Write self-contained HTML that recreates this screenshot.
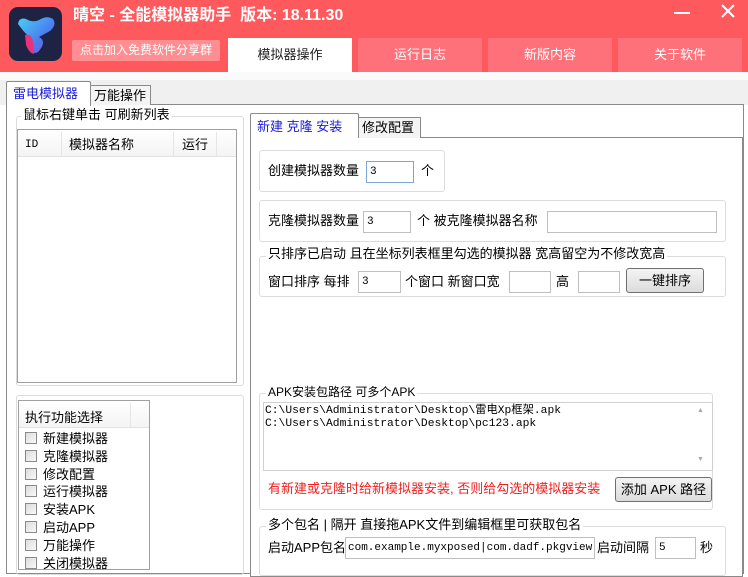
<!DOCTYPE html>
<html><head><meta charset="utf-8"><style>
*{margin:0;padding:0;box-sizing:border-box}
body{width:748px;height:568px;overflow:hidden;background:#fff;font-family:"Liberation Sans","Noto Sans CJK SC",sans-serif;font-size:12px;color:#000;position:relative}
.a{position:absolute;white-space:nowrap}
.hdr{left:0;top:0;width:748px;height:72px;background:#fe5a5e}
.tab{top:38px;height:34px;width:124px;background:#ff717a;color:#fff;font-size:13px;text-align:center;line-height:34px}
.grp{border:1px solid #dcdcdc;border-radius:3px}
.leg{background:#fff;padding:0 2px;font-size:12px;line-height:14px}
.inp{border:1px solid #bfbfbf;background:#fff;height:22px;font-size:11px;line-height:20px;padding-left:3px;font-family:"Liberation Mono","Noto Sans CJK SC",monospace}
.btn{border:1px solid #707070;border-radius:3px;background:linear-gradient(#f4f4f4,#dcdcdc);text-align:center;font-size:13px}
.lbl{font-size:12px;line-height:14px}
.cb{width:12px;height:12px;border:1px solid #8a8a8a;background:linear-gradient(135deg,#ddd,#f8f8f8)}
</style></head><body>
<div class="a hdr"></div>
<div class="a" style="left:9px;top:7px;width:53px;height:54px;border-radius:9px;background:#1e2344"></div>
<svg class="a" style="left:9px;top:7px" width="53" height="54" viewBox="0 0 53 54">
<defs><linearGradient id="g" x1="0" y1="0" x2="1" y2="1"><stop offset="0" stop-color="#4ad0f5"/><stop offset="0.6" stop-color="#4a7df0"/><stop offset="1" stop-color="#8a4bd8"/></linearGradient></defs>
<path d="M9 17 Q10 10 17 12 Q24 16 30 13 Q38 8 44 12 Q48 18 41 24 L30 30 Q38 34 30 44 Q26 48 22 44 L20 30 Q14 24 9 17Z" fill="url(#g)"/>
<path d="M16 28 Q22 26 24 34 L25 47 Q20 46 17 38Z" fill="#e8327a"/>
</svg>
<div class="a" style="left:73px;top:6px;color:#fff;font-size:16px;font-weight:bold;line-height:20px">晴空 - 全能模拟器助手&nbsp; 版本: 18.11.30</div>
<div class="a" style="left:72px;top:40px;width:148px;height:21px;background:#ff8e93;color:#fff;font-size:12px;line-height:21px;text-align:center;border-radius:2px">点击加入免费软件分享群</div>
<div class="a tab" style="left:228px;background:#fff;color:#222">模拟器操作</div>
<div class="a tab" style="left:358px">运行日志</div>
<div class="a tab" style="left:488px">新版内容</div>
<div class="a tab" style="left:618px">关于软件</div>
<div class="a" style="left:674px;top:12px;width:16px;height:2px;background:#fff"></div>
<svg class="a" style="left:720px;top:3px" width="16" height="16"><path d="M2 2L14 14M14 2L2 14" stroke="#fff" stroke-width="2"/></svg>
<div class="a" style="left:0;top:72px;width:748px;height:8px;background:#fafafa"></div>
<div class="a" style="left:0;top:80px;width:748px;height:25px;background:#f0f0f0"></div>
<div class="a" style="left:6px;top:104px;width:738px;height:470px;border:1px solid #8a8a8a;background:#fff"></div>
<div class="a" style="left:6px;top:81px;width:85px;height:25px;border:1px solid #8a8a8a;border-bottom:none;background:#fff;color:#1a1ad8;font-size:13px;line-height:24px;padding-left:6px;border-radius:2px 2px 0 0">雷电模拟器</div>
<div class="a" style="left:90px;top:85px;width:61px;height:20px;border:1px solid #8a8a8a;border-bottom:none;background:#f4f4f4;font-size:13px;line-height:19px;padding-left:3px">万能操作</div>

<div class="a grp" style="left:16px;top:116px;width:228px;height:270px"></div>
<div class="a leg" style="left:21px;top:108px;font-size:13px">鼠标右键单击 可刷新列表</div>
<div class="a" style="left:17px;top:129px;width:220px;height:254px;border:1px solid #a0a0a0;background:#fff"></div>
<div class="a" style="left:18px;top:130px;width:218px;height:27px;background:linear-gradient(#fff,#f4f4f4);border-bottom:1px solid #e2e2e2"></div>
<div class="a" style="left:61px;top:132px;width:1px;height:24px;background:#e5e5e5"></div>
<div class="a" style="left:173px;top:132px;width:1px;height:24px;background:#e5e5e5"></div>
<div class="a" style="left:216px;top:132px;width:1px;height:24px;background:#e5e5e5"></div>
<div class="a" style="left:25px;top:139px;font-size:11px;font-family:'Liberation Mono',monospace">ID</div>
<div class="a" style="left:69px;top:134px;font-size:13px">模拟器名称</div>
<div class="a" style="left:182px;top:134px;font-size:13px">运行</div>

<div class="a grp" style="left:16px;top:395px;width:228px;height:180px"></div>
<div class="a" style="left:18px;top:400px;width:132px;height:170px;border:1px solid #a0a0a0;background:#fff"></div>
<div class="a" style="left:19px;top:401px;width:130px;height:27px;background:linear-gradient(#fff,#f4f4f4);border-bottom:1px solid #e2e2e2"></div>
<div class="a" style="left:130px;top:403px;width:1px;height:24px;background:#e5e5e5"></div>
<div class="a" style="left:25px;top:407px;font-size:13px">执行功能选择</div>
<div class="a" style="left:25px;top:430px;line-height:17.8px;font-size:13px">
<div><span class="cb" style="display:inline-block;vertical-align:-1px;margin-right:6px"></span>新建模拟器</div>
<div><span class="cb" style="display:inline-block;vertical-align:-1px;margin-right:6px"></span>克隆模拟器</div>
<div><span class="cb" style="display:inline-block;vertical-align:-1px;margin-right:6px"></span>修改配置</div>
<div><span class="cb" style="display:inline-block;vertical-align:-1px;margin-right:6px"></span>运行模拟器</div>
<div><span class="cb" style="display:inline-block;vertical-align:-1px;margin-right:6px"></span>安装APK</div>
<div><span class="cb" style="display:inline-block;vertical-align:-1px;margin-right:6px"></span>启动APP</div>
<div><span class="cb" style="display:inline-block;vertical-align:-1px;margin-right:6px"></span>万能操作</div>
<div><span class="cb" style="display:inline-block;vertical-align:-1px;margin-right:6px"></span>关闭模拟器</div>
</div>

<div class="a" style="left:250px;top:137px;width:493px;height:440px;border:1px solid #8a8a8a;background:#fff"></div>
<div class="a" style="left:250px;top:113px;width:109px;height:25px;border:1px solid #8a8a8a;border-bottom:none;background:#fff;color:#1a1ad8;font-size:13px;line-height:26px;padding-left:6px;border-radius:2px 2px 0 0">新建 克隆 安装</div>
<div class="a" style="left:358px;top:117px;width:63px;height:21px;border:1px solid #8a8a8a;border-bottom:none;background:#f4f4f4;font-size:13px;line-height:20px;padding-left:3px">修改配置</div>

<div class="a grp" style="left:259px;top:150px;width:186px;height:42px"></div>
<div class="a lbl" style="left:268px;top:164px;font-size:13px">创建模拟器数量</div>
<div class="a inp" style="left:366px;top:161px;width:48px;border-color:#7aa7d6">3</div>
<div class="a lbl" style="left:421px;top:164px;font-size:13px">个</div>

<div class="a grp" style="left:259px;top:200px;width:467px;height:42px"></div>
<div class="a lbl" style="left:268px;top:214px;font-size:13px">克隆模拟器数量</div>
<div class="a inp" style="left:363px;top:211px;width:48px">3</div>
<div class="a lbl" style="left:417px;top:214px;font-size:13px">个 被克隆模拟器名称</div>
<div class="a inp" style="left:547px;top:211px;width:170px"></div>

<div class="a grp" style="left:259px;top:256px;width:467px;height:41px"></div>
<div class="a leg" style="left:266px;top:247px;font-size:13px">只排序已启动 且在坐标列表框里勾选的模拟器 宽高留空为不修改宽高</div>
<div class="a lbl" style="left:268px;top:275px;font-size:13px">窗口排序 每排</div>
<div class="a inp" style="left:358px;top:271px;width:43px">3</div>
<div class="a lbl" style="left:405px;top:275px;font-size:13px">个窗口 新窗口宽</div>
<div class="a inp" style="left:509px;top:271px;width:42px"></div>
<div class="a lbl" style="left:556px;top:275px;font-size:13px">高</div>
<div class="a inp" style="left:578px;top:271px;width:42px"></div>
<div class="a btn" style="left:626px;top:268px;width:78px;height:25px;line-height:23px">一键排序</div>

<div class="a grp" style="left:259px;top:393px;width:454px;height:117px"></div>
<div class="a leg" style="left:266px;top:385px">APK安装包路径 可多个APK</div>
<div class="a" style="left:263px;top:402px;width:450px;height:69px;border:1px solid #d0d0d0;background:#fff"></div>
<div class="a" style="left:265px;top:405px;font-size:11.3px;line-height:13px;font-family:'Liberation Mono','Noto Sans CJK SC',monospace">C:\Users\Administrator\Desktop\雷电Xp框架.apk<br>C:\Users\Administrator\Desktop\pc123.apk</div>
<div class="a" style="left:697px;top:407px;color:#aaa;font-size:7px">▲</div>
<div class="a" style="left:697px;top:456px;color:#aaa;font-size:7px">▼</div>
<div class="a lbl" style="left:268px;top:482px;color:#f02020;font-size:13px">有新建或克隆时给新模拟器安装, 否则给勾选的模拟器安装</div>
<div class="a btn" style="left:615px;top:477px;width:97px;height:25px;line-height:23px">添加 APK 路径</div>

<div class="a grp" style="left:259px;top:526px;width:467px;height:50px"></div>
<div class="a leg" style="left:266px;top:518px;font-size:13px">多个包名 | 隔开 直接拖APK文件到编辑框里可获取包名</div>
<div class="a lbl" style="left:268px;top:541px;font-size:13px">启动APP包名</div>
<div class="a inp" style="left:345px;top:537px;width:250px;font-size:11px;padding-left:2px">com.example.myxposed|com.dadf.pkgview</div>
<div class="a lbl" style="left:597px;top:541px;font-size:13px">启动间隔</div>
<div class="a inp" style="left:655px;top:537px;width:41px">5</div>
<div class="a lbl" style="left:700px;top:541px;font-size:13px">秒</div>
</body></html>
